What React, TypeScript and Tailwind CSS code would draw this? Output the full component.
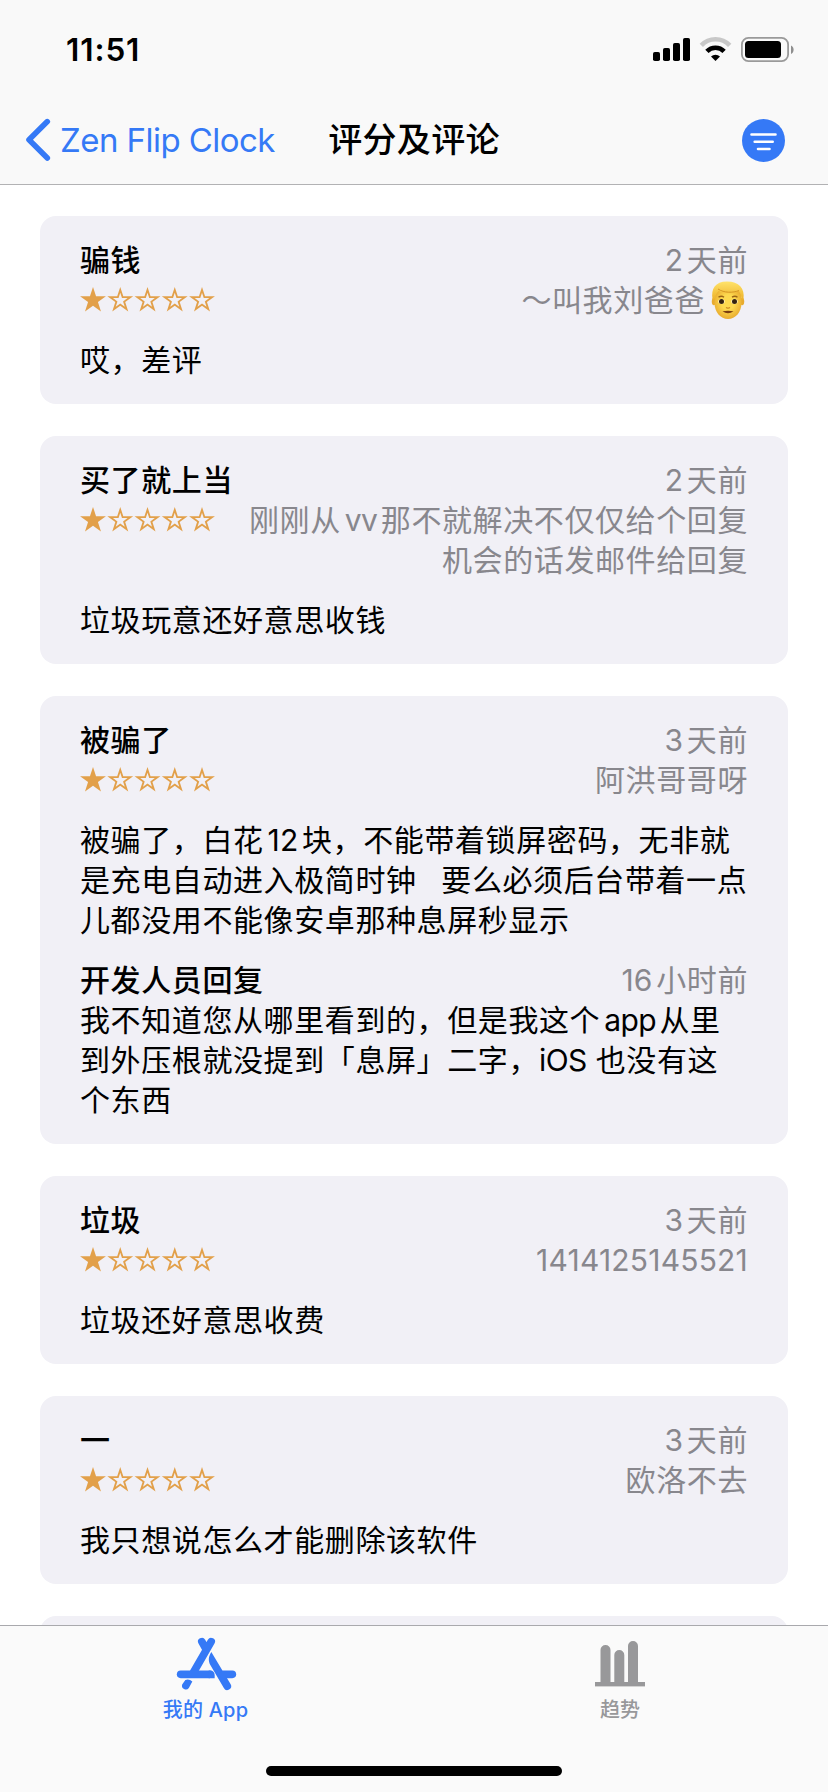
import { Fragment } from "react";

interface Reply {
    date: string
    lines: string[]
}

interface Review {
    id: number
    title: string
    date: string
    rating: number
    author: string[]
    emoji?: boolean
    lines: string[]
    reply?: Reply
}

const reviews: Review[] = [
    { id: 1, title: "骗钱", date: "2天前", rating: 1, author: ["～叫我刘爸爸"], emoji: true, lines: ["哎，差评"] },
    {
        id: 2,
        title: "买了就上当",
        date: "2天前",
        rating: 1,
        author: ["刚刚从vv那不就解决不仅仅给个回复", "机会的话发邮件给回复"],
        lines: ["垃圾玩意还好意思收钱"],
    },
    {
        id: 3,
        title: "被骗了",
        date: "3天前",
        rating: 1,
        author: ["阿洪哥哥呀"],
        lines: [
            "被骗了，白花12块，不能带着锁屏密码，无非就",
            "是充电自动进入极简时钟   要么必须后台带着一点",
            "儿都没用不能像安卓那种息屏秒显示",
        ],
        reply: {
            date: "16小时前",
            lines: [
                "我不知道您从哪里看到的，但是我这个app从里",
                "到外压根就没提到「息屏」二字，iOS 也没有这",
                "个东西",
            ],
        },
    },
    { id: 4, title: "垃圾", date: "3天前", rating: 1, author: ["1414125145521"], lines: ["垃圾还好意思收费"] },
    { id: 5, title: "一", date: "3天前", rating: 1, author: ["欧洛不去"], lines: ["我只想说怎么才能删除该软件"] },
]

// Latin runs get a little air on the sides that touch Chinese text
function Mixed({ text }: { text: string }) {
    const parts = text.split(/([A-Za-z0-9]+)/)

    return (
        <>
            {parts.map((part, index) => {
                if (index % 2 === 0) return <Fragment key={index}>{part}</Fragment>
                const left = /[^\s，]$/.test(parts[index - 1])
                const right = /^\S/.test(parts[index + 1])
                const tracking = /^\d/.test(part) ? "tracking-[0.2px]" : "tracking-[-0.6px]"
                return (
                    <span key={index} className={`${tracking} ${left ? "ml-1" : ""} ${right ? "mr-[3.5px]" : ""}`}>
                        {part}
                    </span>
                )
            })}
        </>
    )
}

function Lines({ lines }: { lines: string[] }) {
    return (
        <>
            {lines.map((line) => (
                <p key={line} className="whitespace-pre"><Mixed text={line} /></p>
            ))}
        </>
    )
}

function starPoints(cx: number, cy: number, r: number) {
    return Array.from({ length: 10 }, (_, i) => {
        const radius = i % 2 === 0 ? r : r * 0.382
        const angle = (Math.PI / 5) * i - Math.PI / 2
        return `${(cx + radius * Math.cos(angle)).toFixed(2)} ${(cy + radius * Math.sin(angle)).toFixed(2)}`
    }).join("L")
}

function Stars({ rating }: { rating: number }) {
    return (
        <svg className="shrink-0" width="136" height="40" viewBox="0 0 136 40" fill="#e2a04a" fillRule="evenodd">
            {[0, 1, 2, 3, 4].map((i) => {
                const cx = 13 + i * 27.25
                const hole = i < rating ? "" : `M${starPoints(cx, 20.5, 7.7)}Z`
                return <path key={i} d={`M${starPoints(cx, 20.5, 13.6)}Z${hole}`} />
            })}
        </svg>
    )
}

function ManEmoji() {
    return (
        <svg className="inline-block align-top ml-[6px] mr-[3px] mt-px" width="34" height="38" viewBox="0 0 34 38">
            <defs>
                <radialGradient id="skin" cx="50%" cy="45%" r="60%">
                    <stop offset="0.4" stopColor="#fdd94f" />
                    <stop offset="1" stopColor="#e6a52a" />
                </radialGradient>
                <linearGradient id="hair" x1="0" y1="0" x2="0" y2="1">
                    <stop offset="0" stopColor="#ffe36b" />
                    <stop offset="1" stopColor="#edb127" />
                </linearGradient>
            </defs>
            <ellipse cx="2.8" cy="20.5" rx="2" ry="3.8" fill="#e8ab2f" />
            <ellipse cx="31.2" cy="20.5" rx="2" ry="3.8" fill="#e8ab2f" />
            <path d="M3.5 12C5 6 29 6 30.5 12v10c0 9-6 16-13.5 16S3.5 31 3.5 22Z" fill="url(#skin)" />
            <path d="M1.5 18C0 8 4 .5 16 .5S34 7 32.5 18L30.5 19c0-4-1-7-3-9-8 3-15 2.500-20 0-2 2-3.500 5-4 9Z" fill="url(#hair)" />
            <path d="M7 8c6 4 15 4 21 1.5" fill="none" stroke="#d3921f" strokeWidth="0.9" />
            <path d="M7.500 16.200q3-1.800 5.500 0M21 16.200q3-1.800 5.500 0" fill="none" stroke="#9a6414" strokeWidth="1.4" />
            <ellipse cx="10.5" cy="20.6" rx="3.2" ry="2.4" fill="#fff4cf" />
            <ellipse cx="23.5" cy="20.6" rx="3.2" ry="2.4" fill="#fff4cf" />
            <circle cx="10.5" cy="20.6" r="2.5" fill="#35220f" />
            <circle cx="23.5" cy="20.6" r="2.5" fill="#35220f" />
            <path d="M15 26.500q2 1.300 4 0" fill="none" stroke="#c8851c" strokeWidth="1.2" />
            <path d="M11.500 30.300q5.500-1.200 11 0-5.500 4-11 0Z" fill="#7a3d10" />
        </svg>
    )
}

function ReviewCard({ review }: { review: Review }) {
    return (
        <li className="flex flex-col gap-5 rounded-2xl bg-[#f1f0f6] px-10 py-6">
            <div>
                <div className="flex justify-between">
                    <h2 className="font-medium">{review.title}</h2>
                    <span className="text-[#88878d]"><Mixed text={review.date} /></span>
                </div>
                <div className="flex justify-between">
                    <Stars rating={review.rating} />
                    <div className="text-right text-[#88878d]">
                        {review.emoji ? (
                            <p className="flex"><Mixed text={review.author[0]} /><ManEmoji /></p>
                        ) : (
                            <Lines lines={review.author} />
                        )}
                    </div>
                </div>
            </div>
            <div className="[word-spacing:-0.8px]"><Lines lines={review.lines} /></div>
            {review.reply && (
                <div>
                    <div className="flex justify-between">
                        <h3 className="font-medium">开发人员回复</h3>
                        <span className="text-[#88878d]"><Mixed text={review.reply.date} /></span>
                    </div>
                    <Lines lines={review.reply.lines} />
                </div>
            )}
        </li>
    )
}

function StatusBar() {
    return (
        <div className="flex h-[84px] items-start justify-between pl-[66px] pr-[33px]">
            <span className="mt-[30px] text-[31.5px] leading-10 font-semibold tracking-[0.9px]">11:51</span>
            <svg className="mt-9" width="142" height="28" viewBox="0 0 142 28">
                <rect x="0" y="16" width="7" height="9" rx="1.8" />
                <rect x="10" y="12" width="7" height="13" rx="1.8" />
                <rect x="20" y="7" width="7" height="18" rx="1.8" />
                <rect x="30" y="2" width="7" height="23" rx="1.8" />
                <path d="M48.300 9.400a19.500 19.500 0 0 1 28.400 0" fill="none" stroke="#c8c8c8" strokeWidth="4.6" />
                <path d="M53.900 15.400a12 12 0 0 1 17.200 0" fill="none" stroke="#000" strokeWidth="4.6" />
                <path d="M62.500 25l-4.500-4.600a6.800 6.800 0 0 1 9 0Z" />
                <rect x="88.900" y="1.9" width="46.200" height="23.200" rx="6.5" fill="none" stroke="#9a9a9a" strokeWidth="1.8" />
                <rect x="92" y="5" width="36" height="17" rx="3.5" />
                <path d="M138 9.500c3.500 1.500 3.500 7 0 8.500Z" fill="#8f8f8f" />
            </svg>
        </div>
    )
}

function NavBar() {
    return (
        <div className="grid h-[100px] grid-cols-[1fr_auto_1fr] items-center pt-[13px] pb-[1px] text-[34px] leading-[48px]">
            <button type="button" className="flex h-11 items-center pl-6 text-[#3579f6]">
                <svg width="36" height="44" viewBox="0 0 36 44" fill="none" stroke="currentColor" strokeWidth="5.6" strokeLinecap="round" strokeLinejoin="round">
                    <path d="M23.300 3.600L5 21.800L23.300 40" />
                </svg>
                <span className="text-[33px] tracking-[-0.550px] whitespace-nowrap">Zen Flip Clock</span>
            </button>
            <h1 className="font-medium tracking-[0.3px]">评分及评论</h1>
            <button type="button" className="mr-[43px] justify-self-end">
                <svg width="43" height="43" viewBox="0 0 43 43" stroke="#fff" strokeWidth="2.6" strokeLinecap="round">
                    <circle cx="21.5" cy="21.5" r="21.5" fill="#3579f6" stroke="none" />
                    <path d="M9.500 15.500h24M12.700 22.700h18M16 30h11.500" />
                </svg>
            </button>
        </div>
    )
}

function TabBar() {
    return (
        <footer className="flex h-[167px] flex-col items-center border-t border-[#a9a9ad] bg-[#fafafa]">
            <nav className="grid h-[140px] w-full grid-cols-2 text-xl leading-7 font-medium">
                <a className="flex flex-col items-center pr-[3px] text-[#3579f6]">
                    <svg className="mt-1 -mb-1" width="80" height="70" viewBox="0 0 240 210" fill="none" stroke="currentColor" strokeWidth="23" strokeLinecap="round">
                        <path d="M135.500 35L83 126M107.500 35L120 57" />
                        <path d="M44 133H130" />
                        <path d="M128 121.500h8q10 3 10 14v9h-18Z" fill="currentColor" stroke="none" />
                        <path d="M136 66C127 80 126 92 133 105L173.500 174A11.500 11.500 0 0 0 194 163Z" fill="currentColor" stroke="none" />
                        <path d="M172 133H199" />
                        <path d="M58 150q11-5 21 4.500L68.500 174A11.500 11.500 0 0 1 48.500 163.500Z" fill="currentColor" stroke="none" />
                    </svg>
                    <span className="tracking-[0.2px]">我的 App</span>
                </a>
                <a className="flex flex-col items-center pr-[2px] text-[#98989a]">
                    <svg className="mt-2 mb-0.5" width="64" height="60" viewBox="0 0 64 60" fill="currentColor">
                        <path d="M12.500 49V16a5 5 0 0 1 10 0v33ZM26.300 49V21a5 5 0 0 1 10 0v28ZM40 49V12a5 5 0 0 1 10 0v37Z" />
                        <rect x="7" y="48" width="50" height="4.4" />
                    </svg>
                    <span>趋势</span>
                </a>
            </nav>
            <div className="h-[10px] w-[296px] rounded-full bg-black" />
        </footer>
    )
}

export default function App() {
    return (
        <div className="flex h-[1792px] w-[828px] flex-col overflow-hidden bg-white font-[Inter,'Noto_Sans_CJK_SC',sans-serif] text-black">
            <header className="h-[185px] shrink-0 border-b border-[#b2b2b4] bg-[#f9f9f9]">
                <StatusBar />
                <NavBar />
            </header>
            <main className="h-[1440px] shrink-0 overflow-hidden px-10 pt-[31px]">
                <ul className="flex flex-col gap-8 text-[30px] leading-10 tracking-[0.6px]">
                    {reviews.map((review) => (
                        <ReviewCard key={review.id} review={review} />
                    ))}
                    <li className="h-[188px] rounded-2xl bg-[#f1f0f6]" />
                </ul>
            </main>
            <TabBar />
        </div>
    )
}
